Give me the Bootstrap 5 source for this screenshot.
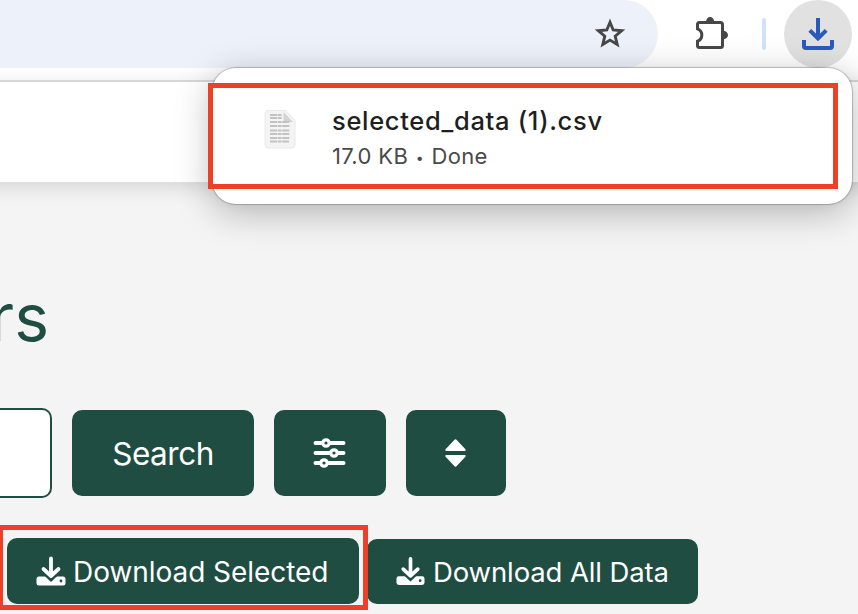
<!DOCTYPE html>
<html lang="en">
<head>
<meta charset="utf-8">
<meta name="viewport" content="width=device-width, initial-scale=1">
<title>Download Selected</title>
<link href="https://cdn.jsdelivr.net/npm/bootstrap@5.3.0/dist/css/bootstrap.min.css" rel="stylesheet">
<style>
  body{font-family:Inter,"Liberation Sans",sans-serif;background:#f4f4f4;height:614px;color:#1f1f1f}
  svg{display:block;flex:none}
  .toolbar{height:82px;border-bottom:2px solid #e0e0e0}
  .omnibox{width:658px;height:68px;border-radius:0 34px 34px 0;background:#edf1fa;padding-right:32px}
  .toolbar-icons{height:68px;padding-left:36px}
  .divider{width:4px;height:32px;border-radius:2px;background:#d3e0fa;margin-left:34px}
  .dl-circle{width:68px;height:68px;background:#e1e1e1;margin-left:18px}
  .site-header{height:100px;margin:0 -40px;box-shadow:0 4px 20px rgba(0,0,0,.14)}
  .page-title{width:49px;height:84px;margin-top:93px;font-size:66px;line-height:84px;color:#1f4d41}
  .controls{gap:20px;margin-top:49px;height:90px}
  .search-input{width:52px;height:90px;border:2px solid #1f4d41;border-left:0;border-radius:0 10px 10px 0;background:#fff}
  .btn-green{--bs-btn-color:#fff;--bs-btn-bg:#1f4d41;--bs-btn-hover-color:#fff;--bs-btn-hover-bg:#183d34;--bs-btn-border-width:0px;--bs-btn-border-radius:10px;line-height:1}
  .btn-search{width:182px;height:86px;font-size:31.5px;letter-spacing:-.5px}
  .btn-search span{display:block;padding-top:1px}
  .btn-filter{width:112px;height:86px}
  .btn-sort{width:100px;height:86px}
  .downloads{margin-top:40px;padding-left:7px;gap:8px;height:66px}
  .btn-selected{width:352px;height:66px;padding-left:29px;font-size:28px;gap:7px}
  .btn-selected span{padding-top:1px;letter-spacing:-.05px}
  .btn-all{width:331px;height:65px;padding-left:29px;font-size:27.5px;gap:8px}
  .btn-all span{padding-top:3px;letter-spacing:-.12px}
  .popup{left:212px;top:68px;width:640px;height:136px;border-radius:24px;box-shadow:0 0 1px 1px rgba(0,0,0,.22),0 8px 36px rgba(0,0,0,.28);padding:38px 0 0 52px}
  .file-text{margin-left:36px}
  .file-name{font-size:25.5px;line-height:30px;font-weight:500;letter-spacing:.67px}
  .file-meta{font-size:22px;line-height:28px;color:#4a4a4a;margin-top:6px;letter-spacing:.35px}
  .bullet{font-size:14px;vertical-align:1.5px;margin:0 1px}
  .outline{border:5px solid #ec4126}
  .outline-top{left:208px;top:83px;width:630px;height:106px}
  .outline-bottom{left:-2px;top:525px;width:370px;height:85px}
</style>
</head>
<body class="position-relative overflow-hidden">
<div class="toolbar d-flex bg-white">
  <div class="omnibox d-flex align-items-center justify-content-end">
    <svg width="32" height="32" viewBox="0 0 32 32"><path d="M16 4.2 19.2 12l8.500.7-6.500 5.500 2 8.300L16 22.100l-7.200 4.400 2-8.300-6.500-5.500 8.500-.7Z" fill="none" stroke="#474747" stroke-width="2.900"/></svg>
  </div>
  <div class="toolbar-icons d-flex align-items-center">
    <svg width="34" height="36" viewBox="694 15 34 36"><path d="M699.500 21.500H720.500Q722.500 21.500 722.500 23.500V44.500Q722.500 46.500 720.500 46.500H699.500Q697.500 46.500 697.500 44.500V40.200Q701.800 38.600 701.800 34 701.800 29.500 697.500 27.800V23.500Q697.500 21.500 699.500 21.500Z" fill="none" stroke="#474747" stroke-width="3"/><path d="M706 21a4.100 5 0 0 1 8.200 0ZM723 29.700a5 4.300 0 0 1 0 8.600Z" fill="#474747"/></svg>
    <div class="divider"></div>
    <div class="dl-circle rounded-circle d-flex align-items-center justify-content-center">
      <svg width="34" height="34" viewBox="0 0 34 34" fill="none" stroke="#2a59bd" stroke-width="4"><path d="M17 1v20M8.800 13.300 17 21.500l8.200-8.200M3 23v6q0 2 2 2h24q2 0 2-2v-6"/></svg>
    </div>
  </div>
</div>
<header class="site-header bg-white"></header>
<main>
  <h1 class="page-title d-flex justify-content-end fw-normal mb-0">rs</h1>
  <div class="controls d-flex align-items-center">
    <div class="search-input"></div>
    <button class="btn btn-green btn-search p-0"><span>Search</span></button>
    <button class="btn btn-green btn-filter d-flex align-items-center justify-content-center p-0" aria-label="Filters">
      <svg width="34" height="32" viewBox="0.500 0 34 32" stroke="#fff" stroke-linecap="round" fill="#1f4d41"><path d="M3 6h28M3 16h28M3 26h28" stroke-width="4"/><g stroke-width="3.200"><circle cx="13.500" cy="6" r="3.200"/><circle cx="21.500" cy="16" r="3.200"/><circle cx="11.500" cy="26" r="3.200"/></g></svg>
    </button>
    <button class="btn btn-green btn-sort d-flex align-items-center justify-content-center p-0" aria-label="Sort">
      <svg width="22" height="30" viewBox="0.500 0 22 30" fill="#fff" stroke="#fff" stroke-width="2" stroke-linejoin="round"><path d="M11 2.200 20.200 12H1.800ZM11 27.800 20.200 18H1.800Z"/></svg>
    </button>
  </div>
  <div class="downloads d-flex align-items-end">
    <button class="btn btn-green btn-selected d-flex align-items-center py-0 pe-0 text-nowrap">
      <svg width="30" height="30" viewBox="0 -1 30 30"><path d="M3 19.500h24q2.500 0 2.500 2.500v4q0 2.500-2.500 2.500H3Q.5 28.500 .5 26v-4Q.5 19.500 3 19.500Z" fill="#fff"/><path d="M7 13l8 7.500 8-7.500" fill="none" stroke="#1f4d41" stroke-width="6.500"/><path d="M15 1.500v17M7.500 12 15 19l7.500-7" fill="none" stroke="#fff" stroke-width="3.800" stroke-linecap="round" stroke-linejoin="round"/><circle cx="25" cy="24" r="1.400" fill="#1f4d41"/></svg>
      <span>Download Selected</span>
    </button>
    <button class="btn btn-green btn-all d-flex align-items-center py-0 pe-0 text-nowrap">
      <svg width="29" height="29" viewBox="0 -0.500 30 30"><path d="M3 19.500h24q2.500 0 2.500 2.500v4q0 2.500-2.500 2.500H3Q.5 28.500 .5 26v-4Q.5 19.500 3 19.500Z" fill="#fff"/><path d="M7 13l8 7.500 8-7.500" fill="none" stroke="#1f4d41" stroke-width="6.500"/><path d="M15 1.500v17M7.500 12 15 19l7.500-7" fill="none" stroke="#fff" stroke-width="3.800" stroke-linecap="round" stroke-linejoin="round"/><circle cx="25" cy="24" r="1.400" fill="#1f4d41"/></svg>
      <span>Download All Data</span>
    </button>
  </div>
</main>
<div class="popup position-absolute bg-white d-flex align-items-start">
  <svg width="32" height="40" viewBox="0 0 32 40" class="mt-1"><path d="M4 .5h17.500L31 10.500V35q0 3-3 3H4q-3 0-3-3V3.500Q1 .5 4 .5Z" fill="#f4f4f4" stroke="#e9e9e9"/><path d="M19.500 2v8.500q0 1.500 1.500 1.500h8Z" fill="#d4d4d4"/><path d="M6 5h12M6 8h12M6 12h20M6 16h20M6 20.500h20M6 24h20M6 28h20M6 31.500h19" stroke="#c2c2c2" stroke-width="2.200" stroke-dasharray="7 .6 4 .6"/></svg>
  <div class="file-text">
    <div class="file-name">selected_data (1).csv</div>
    <div class="file-meta">17.0 KB <span class="bullet">•</span> Done</div>
  </div>
</div>
<div class="outline outline-top position-absolute"></div>
<div class="outline outline-bottom position-absolute"></div>
<script src="https://cdn.jsdelivr.net/npm/bootstrap@5.3.0/dist/js/bootstrap.bundle.min.js"></script>
</body>
</html>
